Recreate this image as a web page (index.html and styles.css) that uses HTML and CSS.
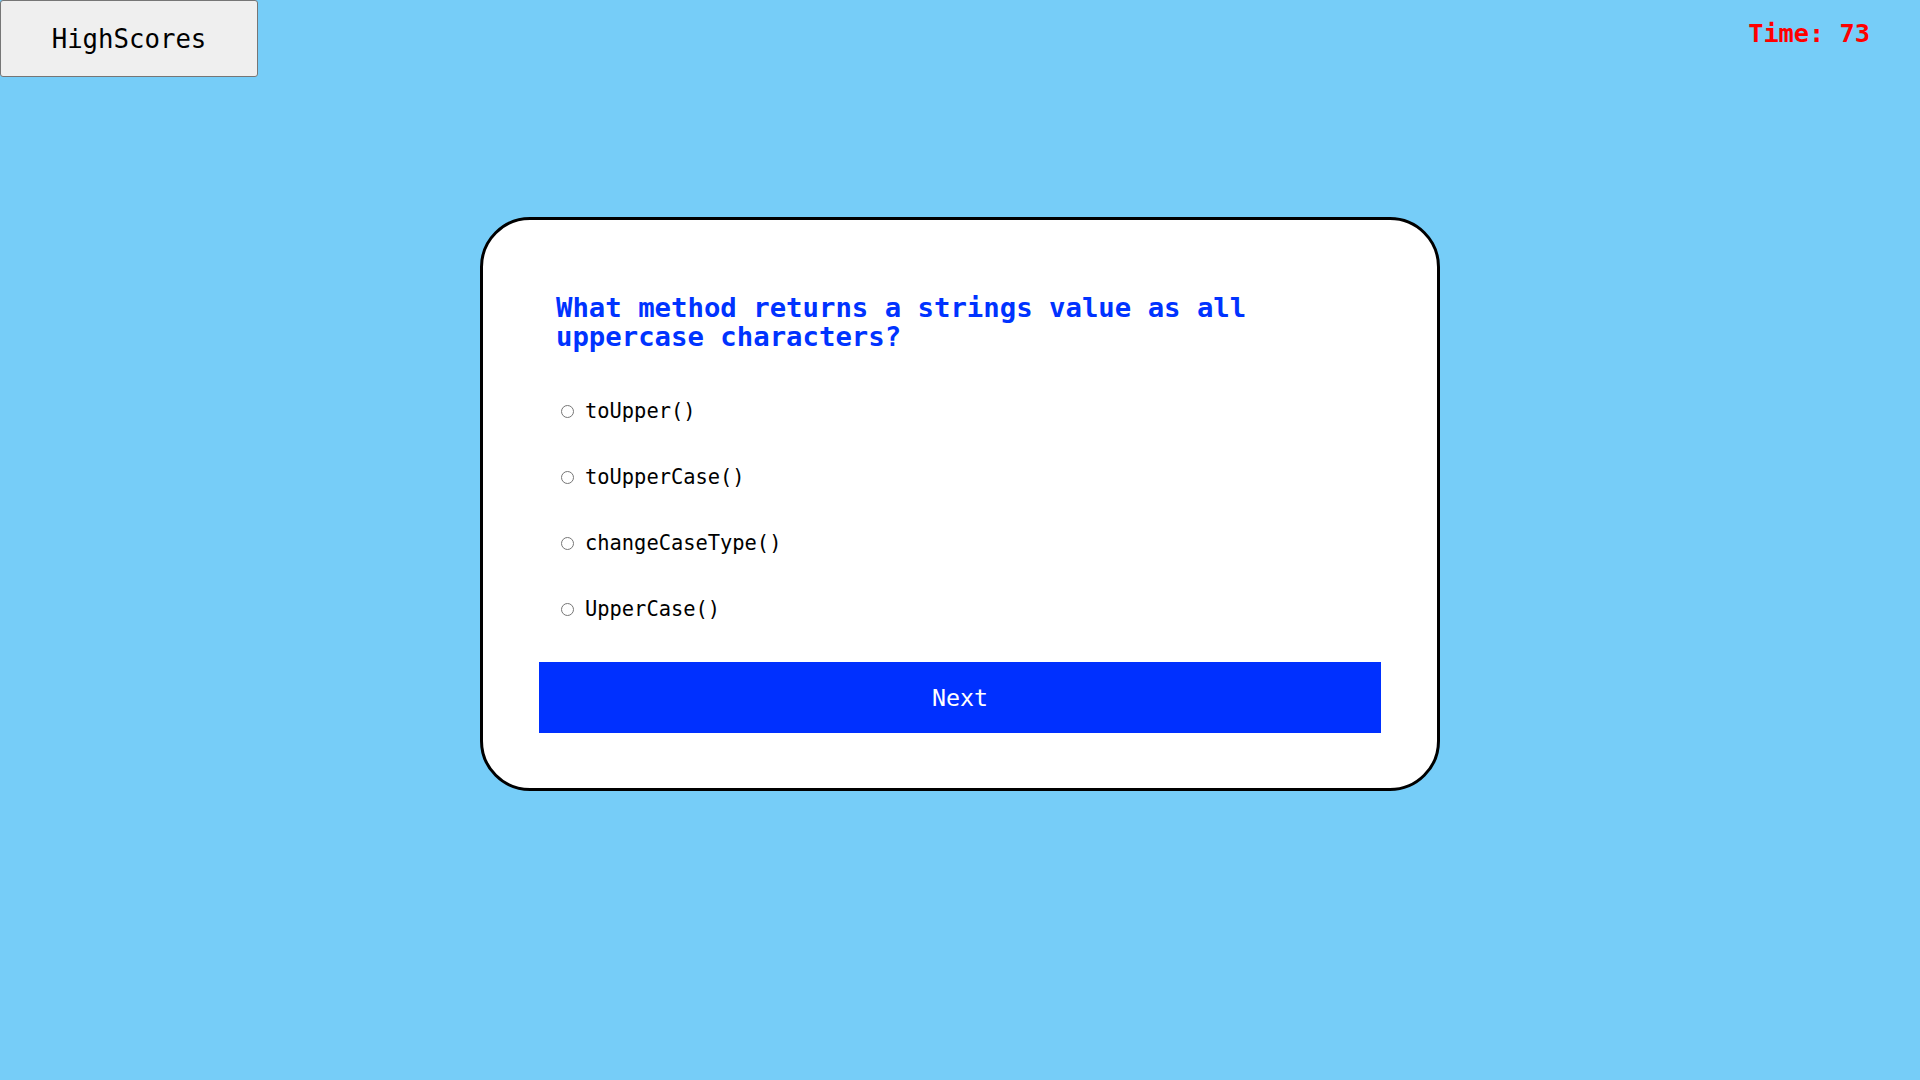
FILE: index.html
```html
<!DOCTYPE html>
<html lang="en">
<head>
<meta charset="utf-8">
<title>Quiz</title>
<link rel="stylesheet" href="styles.css">
</head>
<body>
<header class="topbar">
  <button class="scores-btn" type="button">HighScores</button>
  <div class="timer">Time: 73</div>
</header>
<main class="stage">
  <section class="card">
    <h2 class="question">What method returns a strings value as all uppercase characters?</h2>
    <div class="options">
      <label class="option"><input type="radio" name="answer" class="radio"><span class="option-text">toUpper()</span></label>
      <label class="option"><input type="radio" name="answer" class="radio"><span class="option-text">toUpperCase()</span></label>
      <label class="option"><input type="radio" name="answer" class="radio"><span class="option-text">changeCaseType()</span></label>
      <label class="option"><input type="radio" name="answer" class="radio"><span class="option-text">UpperCase()</span></label>
    </div>
    <button class="next-btn" type="button">Next</button>
  </section>
</main>
</body>
</html>
```
FILE: styles.css
```css
* {
  box-sizing: border-box;
}

html, body {
  margin: 0;
  padding: 0;
}

body {
  width: 1920px;
  height: 1080px;
  background: #76cdf8;
  font-family: "DejaVu Sans Mono", "Liberation Mono", monospace;
  overflow: hidden;
}

.topbar {
  display: flex;
  justify-content: space-between;
  align-items: flex-start;
  height: 76px;
}

.scores-btn {
  width: 258px;
  height: 77px;
  margin: 0;
  padding: 0;
  background: #efefef;
  border: 1px solid #767676;
  border-radius: 3px;
  font-family: "DejaVu Sans Mono", "Liberation Mono", monospace;
  font-size: 25.7px;
  color: #000;
}

.timer {
  padding: 19px 50px 0 0;
  font-size: 25.3px;
  line-height: 30px;
  font-weight: bold;
  color: #ff0000;
}

.stage {
  display: flex;
  justify-content: center;
  padding-top: 141px;
}

.card {
  width: 960px;
  height: 574px;
  background: #ffffff;
  border: 3px solid #000;
  border-radius: 50px;
  padding: 73px 56px 55px;
  display: flex;
  flex-direction: column;
}

.question {
  margin: 0 0 27px 17px;
  font-size: 27.3px;
  line-height: 29px;
  font-weight: bold;
  color: #0033ff;
}

.options {
  display: flex;
  flex-direction: column;
  padding-left: 17px;
}

.option {
  display: flex;
  align-items: center;
  height: 66px;
  font-size: 20.4px;
  color: #000;
}

.radio {
  width: 13px;
  height: 13px;
  margin: 0 11px 0 5px;
  flex: none;
}

.next-btn {
  margin-top: 20px;
  height: 71px;
  width: 100%;
  border: none;
  border-radius: 0;
  background: #0030ff;
  color: #ffffff;
  font-family: "DejaVu Sans Mono", "Liberation Mono", monospace;
  font-size: 23.3px;
  padding: 0;
}
```
